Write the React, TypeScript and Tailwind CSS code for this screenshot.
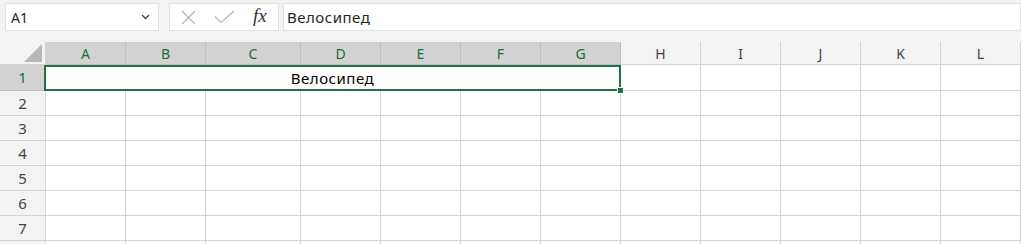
import React from "react";

const cols = ["A", "B", "C", "D", "E", "F", "G", "H", "I", "J", "K", "L"];
const selectedCols = ["A", "B", "C", "D", "E", "F", "G"];
const rows = [2, 3, 4, 5, 6, 7, 8];

const font = { fontFamily: '"Segoe UI", "Noto Sans", "Open Sans", sans-serif' };

export default function App() {
  return (
    <div className="w-[1021px] h-[244px] overflow-hidden bg-[#f3f3f3] text-[#262626]" style={font}>
      {/* formula bar */}
      <div className="flex h-[42px] pt-[3px] pl-[5px]">
        <div className="w-[154px] h-[28px] bg-white border border-[#e1e1e1] flex items-center justify-between pl-[5px] pr-[8px]">
          <span className="text-[14px] text-[#262626]">A1</span>
          <svg width="9" height="6" viewBox="0 0 9 6">
            <path d="M1 1 L4.5 4.5 L8 1" stroke="#444" strokeWidth="1.3" fill="none" />
          </svg>
        </div>
        <div className="ml-[10px] w-[110px] h-[28px] bg-white border border-[#e1e1e1] flex items-center pl-[11px]">
          <svg width="15" height="15" viewBox="0 0 15 15">
            <path d="M1 1 L14 14 M14 1 L1 14" stroke="#b5b5b5" strokeWidth="1.2" fill="none" />
          </svg>
          <svg className="ml-[18px]" width="21" height="14" viewBox="0 0 21 14">
            <path d="M1 6.5 L7 12.5 L20 1" stroke="#b5b5b5" strokeWidth="1.2" fill="none" />
          </svg>
          <span
            className="ml-[18px] italic text-[19px] text-[#333] leading-none -mt-[3px]"
            style={{ fontFamily: '"Liberation Serif", serif' }}
          >
            fx
          </span>
        </div>
        <div className="ml-[4px] flex-1 h-[28px] bg-white border border-[#e1e1e1] flex items-center pl-[3px]">
          <span className="text-[15px] tracking-[0.5px]">Велосипед</span>
        </div>
      </div>

      {/* sheet */}
      <div className="grid grid-cols-[46px_80px_80px_95px_80px_80px_80px_80px_80px_80px_80px_80px_80px] grid-rows-[23px_26px_25px_25px_25px_25px_25px_25px_25px] bg-white">
        {/* corner */}
        <div className="bg-[#f3f3f3] border-r border-b border-[#d4d4d4] relative">
          <svg className="absolute right-[3px] bottom-[2px]" width="18" height="18" viewBox="0 0 18 18">
            <path d="M18 0 L18 18 L0 18 Z" fill="#b8b8b8" />
          </svg>
        </div>
        {cols.map((c) => {
          const sel = selectedCols.includes(c);
          return (
            <div
              key={c}
              className={
                sel
                  ? "bg-[#d2d2d2] border-r border-b border-[#bfbfbf] text-[#1e6c41] text-[14px] flex items-center justify-center"
                  : "bg-[#f3f3f3] border-r border-b border-[#d4d4d4] text-[#444] text-[14px] flex items-center justify-center"
              }
            >
              {c}
            </div>
          );
        })}

        {/* row 1 */}
        <div className="bg-[#d2d2d2] border-r border-b border-[#bfbfbf] text-[#1e6c41] text-[15px] flex items-center justify-center">
          1
        </div>
        <div className="col-span-7 ml-[-2px] border-2 border-[#217346] relative flex items-center justify-center text-[15px] tracking-[0.5px] text-black">
          Велосипед
          <div className="absolute -right-[5px] -bottom-[5px] w-[7px] h-[7px] bg-[#217346] border border-white" />
        </div>
        {cols.slice(7).map((c) => (
          <div key={c} className="border-r border-b border-[#d4d4d4]" />
        ))}

        {rows.map((r) => (
          <React.Fragment key={r}>
            <div className="bg-[#f3f3f3] border-r border-b border-[#d4d4d4] text-[#444] text-[15px] flex items-center justify-center">
              {r < 8 ? r : ""}
            </div>
            {cols.map((c) => (
              <div key={c} className="border-r border-b border-[#d4d4d4]" />
            ))}
          </React.Fragment>
        ))}
      </div>
    </div>
  );
}
